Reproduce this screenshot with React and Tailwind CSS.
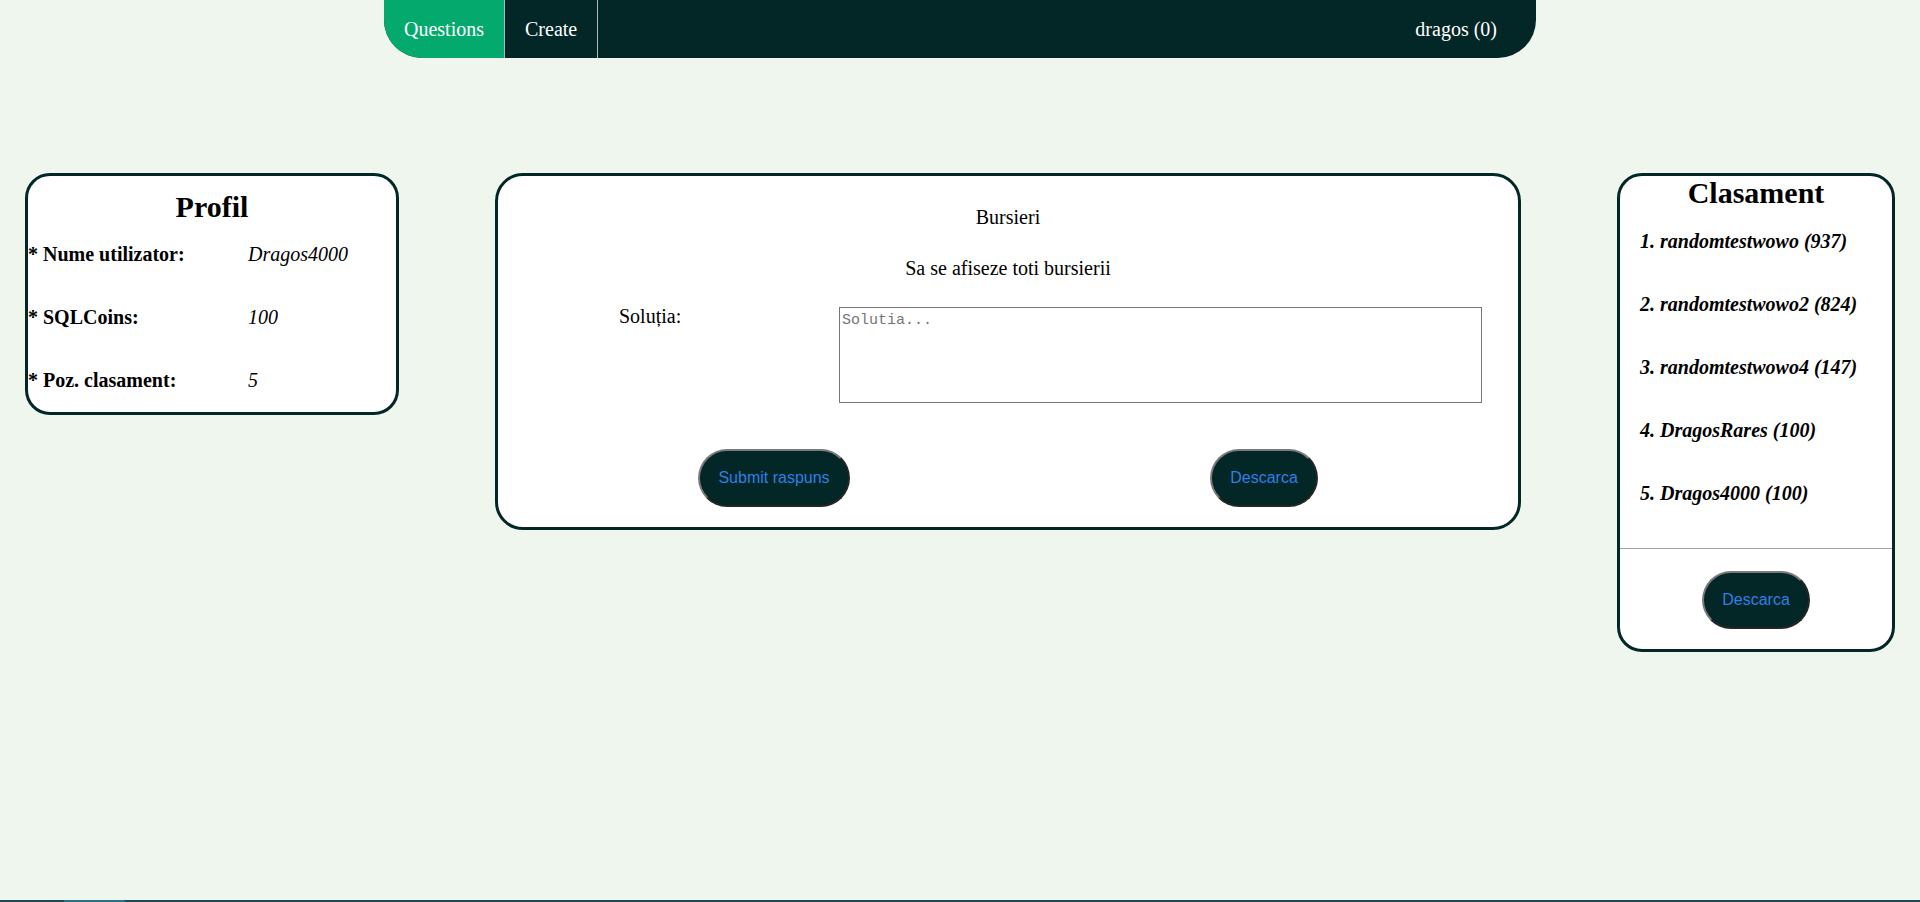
const leaderboard = [
  "1. randomtestwowo (937)",
  "2. randomtestwowo2 (824)",
  "3. randomtestwowo4 (147)",
  "4. DragosRares (100)",
  "5. Dragos4000 (100)",
];

const profile = [
  ["* Nume utilizator:", "Dragos4000"],
  ["* SQLCoins:", "100"],
  ["* Poz. clasament:", "5"],
];

const DarkButton = ({ children, width }) => (
  <button
    className={`h-[58px] ${width} rounded-full border-2 border-[#7a7a7a] [border-style:outset] bg-[#022726] font-['Liberation_Sans',Arial,sans-serif] text-[16px] text-[#2f7fe6]`}
  >
    {children}
  </button>
);

export default function App() {
  return (
    <div className="flex h-[902px] flex-col overflow-hidden bg-[#eff6ee] font-['Liberation_Serif','Times_New_Roman',serif] text-[20px] text-black">
      <nav className="mx-auto flex h-[58px] w-[60%] shrink-0 items-stretch overflow-hidden rounded-b-[38px] bg-[#022726] text-white">
        <a className="flex items-center border-r border-[#b5b5b5] bg-[#04aa6d] px-5 leading-[23px]">
          Questions
        </a>
        <a className="flex items-center border-r border-[#b5b5b5] px-5 leading-[23px]">
          Create
        </a>
        <span className="ml-auto mr-[19px] flex items-center px-5 leading-[23px]">
          dragos (0)
        </span>
      </nav>

      <main className="mt-[115px] flex flex-1 items-start justify-between px-[25px]">
        <section className="w-[374px] rounded-[25px] border-[3px] border-[#022726] bg-white pt-[14px] pb-[20px]">
          <h2 className="text-center text-[30px] font-bold leading-[34px]">Profil</h2>
          <div className="mt-[19px] grid grid-cols-[220px_1fr] gap-y-[40px] leading-[23px]">
            {profile.map(([label, value]) => (
              <div key={label} className="contents">
                <span className="font-bold">{label}</span>
                <span className="italic">{value}</span>
              </div>
            ))}
          </div>
        </section>

        <section className="w-[1026px] rounded-[28px] border-[3px] border-[#022726] bg-white pt-[30px] pb-[20px]">
          <p className="text-center leading-[23px]">Bursieri</p>
          <p className="mt-[28px] text-center leading-[23px]">Sa se afiseze toti bursierii</p>
          <div className="mt-[27px] flex pl-[121px]">
            <label className="w-[220px] leading-[18px]">Soluția:</label>
            <textarea
              placeholder="Solutia..."
              className="h-[96px] w-[643px] resize-none border border-[#767676] p-[2px] font-['Liberation_Mono','Courier_New',monospace] text-[15px] placeholder:text-[#757575]"
            />
          </div>
          <div className="mt-[46px] flex justify-between px-[200px]">
            <DarkButton width="w-[152px]">Submit raspuns</DarkButton>
            <DarkButton width="w-[108px]">Descarca</DarkButton>
          </div>
        </section>

        <section className="w-[278px] rounded-[25px] border-[3px] border-[#022726] bg-white pb-[20px]">
          <h2 className="text-center text-[30px] font-bold leading-[34px]">Clasament</h2>
          <ol className="mt-[20px] flex flex-col gap-[40px] pl-[20px]">
            {leaderboard.map((entry) => (
              <li key={entry} className="font-bold italic leading-[23px]">
                {entry}
              </li>
            ))}
          </ol>
          <div className="mt-[43px] h-px bg-[#a3a3a3]" />
          <div className="mt-[22px] flex justify-center">
            <DarkButton width="w-[108px]">Descarca</DarkButton>
          </div>
        </section>
      </main>

      <div className="flex h-[2px] shrink-0 bg-[#1b4950]">
        <div className="w-[64px]" />
        <div className="w-[61px] bg-[#2a7088]" />
      </div>
    </div>
  );
}
